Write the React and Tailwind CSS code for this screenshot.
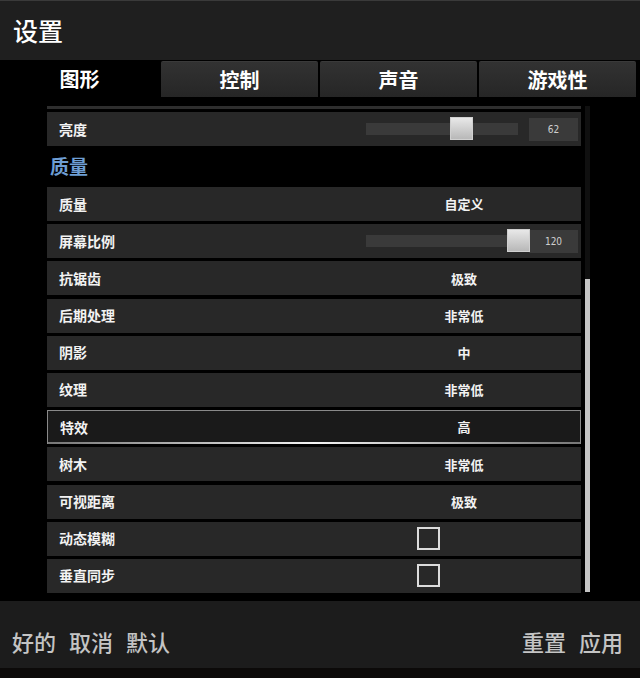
import React from 'react';

const FONT = { fontFamily: '"Noto Sans CJK SC", "Noto Sans", sans-serif' };

const tabs = ['图形', '控制', '声音', '游戏性'];

const rows = [
  { label: '质量', value: '自定义' },
  { label: '屏幕比例', slider: 141, num: '120' },
  { label: '抗锯齿', value: '极致' },
  { label: '后期处理', value: '非常低' },
  { label: '阴影', value: '中' },
  { label: '纹理', value: '非常低' },
  { label: '特效', value: '高', active: true },
  { label: '树木', value: '非常低' },
  { label: '可视距离', value: '极致' },
  { label: '动态模糊', check: true },
  { label: '垂直同步', check: true },
];

const Slider = ({ pos, num }) => (
  <div className="flex items-center pl-[19px]">
    <div className="relative w-[152px] h-[12px] bg-[#3a3a3a]">
      <div
        className="absolute top-[-6px] w-[23px] h-[23px] bg-gradient-to-b from-[#e8e8e8] to-[#b8b8b8] border border-[#d0d0d0]"
        style={{ left: pos }}
      />
    </div>
    <div
      className="ml-[11px] w-[49px] h-[23px] bg-[#3a3a3a] flex items-center justify-center text-[10px] text-[#cfcfcf]"
      style={{ fontFamily: '"DejaVu Sans Condensed", "Liberation Sans", sans-serif' }}
    >
      {num}
    </div>
  </div>
);

const Row = ({ row }) => (
  <div
    className={
      'relative flex items-center h-[34px] ' +
      (row.active ? 'bg-[#1a1a1a] border border-[#8a8a8a]' : 'bg-[#282828]')
    }
  >
    <div className="w-[300px] pl-[12px] text-[14px] font-bold text-[#f2f2f2]">{row.label}</div>
    <div className="flex-1">
      {row.slider !== undefined ? (
        <Slider pos={row.slider} num={row.num} />
      ) : row.check ? (
        <div className="pl-[70px]">
          <div className="w-[23px] h-[23px] border-2 border-[#dcdcdc]" />
        </div>
      ) : (
        <div className="text-center text-[13px] font-bold text-[#f2f2f2]">{row.value}</div>
      )}
    </div>
    {row.active && (
      <div className="absolute left-0 right-0 bottom-[-1px] h-[2px] bg-gradient-to-r from-[#777] via-[#f4f4f4] to-[#777]" />
    )}
  </div>
);

export default function App() {
  return (
    <div className="w-[640px] h-[678px] bg-black overflow-hidden flex flex-col" style={FONT}>
      {/* Header */}
      <div className="h-[60px] bg-[#1f1f1f] border-t border-[#3a3a3a] flex items-center pl-[13px]">
        <span className="text-[25px] font-medium text-white">设置</span>
      </div>

      {/* Tabs */}
      <div className="mt-[1px] h-[36px] flex gap-[2px] pr-[4px]">
        {tabs.map((t, i) => (
          <div
            key={t}
            className={
              'flex items-center justify-center text-[20px] font-bold text-white ' +
              (i === 0
                ? 'w-[159px] bg-black'
                : 'w-[157px] bg-gradient-to-b from-[#323232] to-[#262626] border-t border-[#3a3a3a] rounded-t-[2px]')
            }
          >
            {t}
          </div>
        ))}
      </div>

      {/* Content */}
      <div className="h-[504px] flex pl-[47px] pt-[9px]">
        <div className="w-[534px] flex flex-col">
          <div className="h-[3px] bg-[#2e2e2e]" />
          <div className="mt-[3px]">
            <Row row={{ label: '亮度', slider: 84, num: '62' }} />
          </div>
          <div className="h-[41px] flex items-center pl-[3px] text-[19px] font-bold text-[#6e9ed4]">质量</div>
          <div className="flex flex-col gap-[3.2px]">
            {rows.map((r) => (
              <Row key={r.label} row={r} />
            ))}
          </div>
        </div>
        <div className="ml-[4px] w-[5px] h-[486px] bg-[#101010] flex flex-col">
          <div className="mt-[173px] flex-1 bg-[#c4c4c4]" />
        </div>
      </div>

      {/* Footer */}
      <div className="h-[67px] bg-[#1c1c1c] flex items-center justify-between pl-[12px] pr-[17px] pt-[14px] text-[22px] text-[#c4c4c4] font-medium">
        <div className="flex gap-[13px]">
          <span>好的</span>
          <span>取消</span>
          <span>默认</span>
        </div>
        <div className="flex gap-[13px]">
          <span>重置</span>
          <span>应用</span>
        </div>
      </div>
      <div className="flex-1 bg-[#0c0a09]" />
    </div>
  );
}
